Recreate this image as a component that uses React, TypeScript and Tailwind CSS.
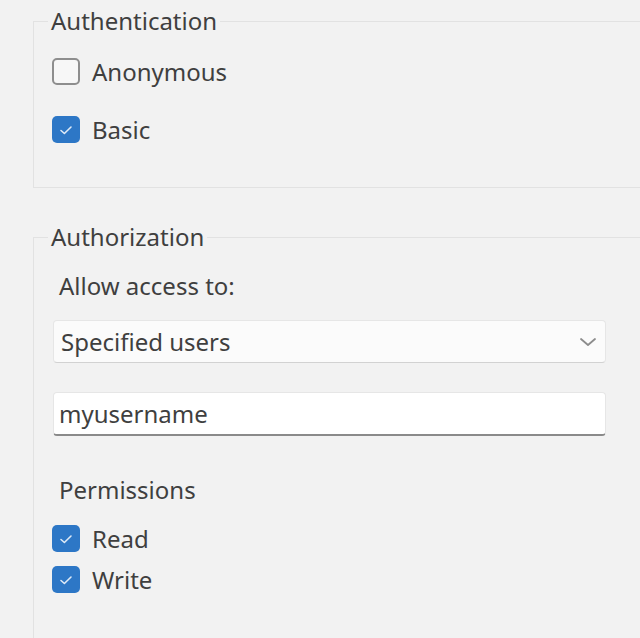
import { useState } from "react";

function Check({ checked, label }: { checked: boolean; label: string }) {
  const [on, setOn] = useState(checked);
  return (
    <label className="flex items-center gap-[12px] h-[27px] cursor-default select-none">
      <span
        onClick={() => setOn(!on)}
        className={
          on
            ? "flex items-center justify-center w-[28px] h-[27px] rounded-[5px] bg-[#2d77c6]"
            : "flex items-center justify-center w-[28px] h-[27px] rounded-[5px] border-[2px] border-[#8e8e8e] bg-[#f7f7f7]"
        }
      >
        {on && (
          <svg width="16" height="16" viewBox="0 0 16 16" fill="none">
            <path d="M3 8.5 L6.4 11.5 L13 5" stroke="#dfeaf6" strokeWidth="1.6" strokeLinecap="round" strokeLinejoin="round" />
          </svg>
        )}
      </span>
      <span className="text-[24px] leading-[32px] text-[#3f3f3f]">{label}</span>
    </label>
  );
}

export default function App() {
  return (
    <div className="w-[640px] h-[638px] overflow-hidden bg-[#f2f2f2] pt-[5px] font-['Noto_Sans',sans-serif]">
      {/* Authentication */}
      <fieldset className="ml-[33px] mr-[-20px] border border-[#e2e2e2] pl-[14px] pr-0 pb-[44px] pt-0 m-0">
        <legend className="px-[3px] text-[24px] leading-[32px] text-[#3f3f3f]">Authentication</legend>
        <div className="flex flex-col gap-[31px] pt-[21px] ml-[4px]">
          <Check checked={false} label="Anonymous" />
          <Check checked={true} label="Basic" />
        </div>
      </fieldset>

      {/* Authorization */}
      <fieldset className="ml-[33px] mr-[-20px] mt-[33px] border border-[#e2e2e2] pl-[14px] pr-0 pb-[80px] pt-0">
        <legend className="px-[3px] text-[24px] leading-[32px] text-[#3f3f3f]">Authorization</legend>
        <div className="flex flex-col pt-[17px] w-[553px] ml-[5px]">
          <div className="pl-[6px] text-[24px] leading-[32px] text-[#3f3f3f]">Allow access to:</div>
          <div className="mt-[18px] h-[43px] flex items-center justify-between rounded-[4px] border border-[#e6e6e6] border-b-[#d2d2d2] bg-[#fbfbfb] pl-[7px] pr-[8px]">
            <span className="text-[24px] leading-[32px] text-[#3f3f3f]">Specified users</span>
            <svg width="18" height="12" viewBox="0 0 18 12" fill="none">
              <path d="M2 3 L9 9 L16 3" stroke="#8c8c8c" strokeWidth="1.8" strokeLinecap="round" strokeLinejoin="round" />
            </svg>
          </div>
          <div className="mt-[29px] h-[44px] flex items-center rounded-[4px] border border-[#e6e6e6] border-b-[2px] border-b-[#8a8a8a] bg-white pl-[5px]">
            <span className="text-[24px] leading-[32px] text-[#3f3f3f]">myusername</span>
          </div>
          <div className="mt-[38px] pl-[6px] text-[24px] leading-[32px] text-[#3f3f3f]">Permissions</div>
          <div className="mt-[19px] ml-[-1px] flex flex-col gap-[14px]">
            <Check checked={true} label="Read" />
            <Check checked={true} label="Write" />
          </div>
        </div>
      </fieldset>
    </div>
  );
}
